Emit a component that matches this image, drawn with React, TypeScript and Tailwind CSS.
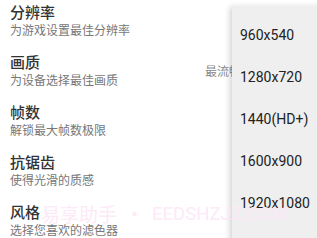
import React from "react";

const rows = [
  { t: "分辨率", s: "为游戏设置最佳分辨率" },
  { t: "画质", s: "为设备选择最佳画质", v: "最流畅" },
  { t: "帧数", s: "解锁最大帧数极限" },
  { t: "抗锯齿", s: "使得光滑的质感" },
  { t: "风格", s: "选择您喜欢的滤色器" },
];

const items = ["960x540", "1280x720", "1440(HD+)", "1600x900", "1920x1080", "2560x1440"];

export default function App() {
  return (
    <div
      className="relative w-[317px] h-[238px] overflow-hidden bg-white"
      style={{ fontFamily: '"Noto Sans CJK SC", "Noto Sans", sans-serif' }}
    >
      <div className="flex flex-col pt-[3px] gap-[14px]">
        {rows.map((r) => (
          <div key={r.t} className="flex items-center justify-between pl-[10px] pr-[76px] h-[36px]">
            <div className="flex flex-col">
              <div className="text-[15px] leading-[18px] font-medium text-[#333333]">{r.t}</div>
              <div className="text-[12px] leading-[18px] text-[#777777]">{r.s}</div>
            </div>
            {r.v && <div className="text-[12px] leading-[18px] text-[#8a8a8a]">{r.v}</div>}
          </div>
        ))}
      </div>

      <div className="absolute left-[232px] top-[6px] w-[110px] h-[260px] bg-[#efefef] shadow-[-2px_1px_6px_rgba(0,0,0,0.18)] pt-[9px] flex flex-col">
        {items.map((it) => (
          <div
            key={it}
            className="h-[42.2px] flex items-center pl-[8px] text-[14px] text-[#222222] whitespace-nowrap"
            style={{ fontFamily: "Roboto, sans-serif" }}
          >
            {it}
          </div>
        ))}
      </div>

      <div className="absolute left-[41px] top-[201px] flex items-center gap-[8px] pointer-events-none whitespace-nowrap text-[#fde9f7]">
        <span className="text-[19px] leading-[26px]">易享助手</span>
        <span className="text-[19px] leading-[26px]">•</span>
        <span className="text-[18.5px] leading-[26px]" style={{ fontFamily: "Roboto, sans-serif" }}>EEDSHZJZ.COM</span>
      </div>
    </div>
  );
}
